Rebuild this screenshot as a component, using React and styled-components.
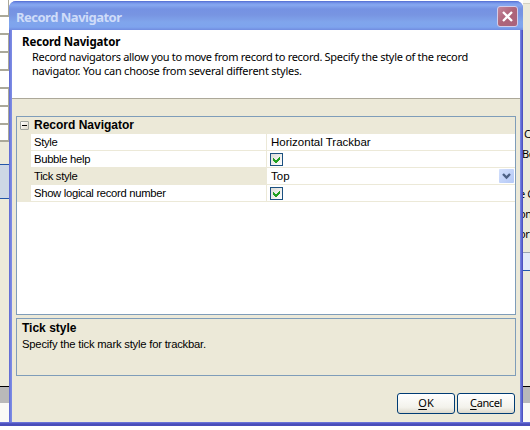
import React from "react";
import styled, { createGlobalStyle } from "styled-components";

const Global = createGlobalStyle`
  * { box-sizing: border-box; }
  body { margin: 0; overflow: hidden; background: #fff; }
`;

const Desktop = styled.div`
  display: grid;
  grid-template-columns: 9px 514px 7px;
  grid-template-rows: 426px 4px;
  width: 530px;
  height: 430px;
  overflow: hidden;
  background: #fff;
  font: 11px/13px "Noto Sans", "Open Sans", sans-serif;
  color: #000;
`;

const Strip = styled.div`
  display: flex;
  flex-direction: column;
  height: 423px;
  overflow: hidden;
  background: #eceada;
`;

const Block = styled.div`
  flex: none;
  height: ${(p) => p.$h}px;
  background: ${(p) => p.$bg || "transparent"};
  border-top: ${(p) => (p.$top ? `1px solid ${p.$top}` : "0")};
  border-bottom: ${(p) => (p.$bottom ? `1px solid ${p.$bottom}` : "0")};
`;

const Cell = styled.div`
  flex: none;
  width: 9px;
  height: ${(p) => p.$h || 18}px;
  background: #fff;
  border-bottom: 2px solid #aaa899;
  border-right: ${(p) => (p.$edge ? "1px solid #aaa899" : "0")};
`;

const Fragment = styled.div`
  flex: none;
  height: 20px;
  line-height: 20px;
  margin-left: ${(p) => p.$x}px;
  letter-spacing: -0.4px;
  white-space: nowrap;
`;

const Frame = styled.section`
  display: flex;
  flex-direction: column;
  height: 425px;
  margin-top: 1px;
  border-radius: 7px 7px 0 0;
  overflow: hidden;
  background: linear-gradient(90deg, #5c66cf 0, #7b8ae4 2px, #7b8ae4 511px, #6874dc 512px, #4548b8 514px);
`;

const TitleBar = styled.header`
  flex: none;
  display: flex;
  justify-content: space-between;
  height: 29px;
  padding: 5px 5px 0 7px;
  background: linear-gradient(#526bd0 0, #7797eb 2px, #86a8f0 4px, #7592e3 8px, #7895e2 14px, #80a5ec 21px, #7ea4ee 26px, #718ce0 29px);
`;

const Title = styled.h1`
  margin: 0;
  font: bold 13px/23px "Noto Sans", sans-serif;
  letter-spacing: -0.5px;
  color: #cfdcf9;
`;

const CloseButton = styled.button`
  display: grid;
  place-items: center;
  width: 21px;
  height: 21px;
  padding: 0;
  border: 1px solid #d2cdea;
  border-radius: 3px;
  background: linear-gradient(135deg, #c3869b, #ae6479 50%, #a9627c);
`;

const Body = styled.div`
  display: flex;
  flex-direction: column;
  height: 393px;
  flex: none;
  margin: 0 3px;
  background: #ece9d8;
`;

const Intro = styled.div`
  flex: none;
  height: 69px;
  padding: 5px 0 0 10px;
  background: #fff;
  border-bottom: 1px solid #aca899;
`;

const Line = styled.p`
  margin: 0;
  width: max-content;
  white-space: nowrap;
  padding-left: ${(p) => p.$indent || 0}px;
  font-size: ${(p) => p.$size || 11}px;
  font-weight: ${(p) => (p.$bold ? 700 : 400)};
  font-family: ${(p) => (p.$grotesk ? '"Liberation Sans", sans-serif' : "inherit")};
  line-height: ${(p) => p.$lh || 13}px;
  letter-spacing: ${(p) => p.$track || 0}px;
`;

const Grid = styled.div`
  flex: none;
  width: 500px;
  height: 199px;
  margin: 17px 0 0 4px;
  border: 1px solid #7f9db9;
  background: #fff;
`;

const GroupRow = styled.div`
  display: flex;
  align-items: center;
  height: 17px;
  background: #ece9d8;
`;

const Toggle = styled.span`
  display: grid;
  place-items: center;
  width: 9px;
  height: 9px;
  margin: 0 5px 1px 3px;
  border: 1px solid #a0a5a0;
  border-radius: 1px;
  background: linear-gradient(135deg, #fff, #dcd8ca);
  &::after { content: ""; width: 5px; height: 1px; background: #000; }
`;

const Row = styled.div`
  display: grid;
  grid-template-columns: 14px 236px 1fr;
  height: 17px;
`;

const Gutter = styled.div`
  background: #ece9d8;
`;

const Name = styled.div`
  padding: 1px 0 0 3px;
  border-right: 1px solid #ece9d8;
  border-bottom: 1px solid #ece9d8;
  background: ${(p) => (p.$selected ? "#ece9d8" : "#fff")};
`;

const Value = styled.div`
  display: flex;
  justify-content: space-between;
  padding: ${(p) => (p.$check ? "2px 0 0 3px" : "1px 1px 0 4px")};
  border-bottom: 1px solid #ece9d8;
`;

const CheckBox = styled.span`
  display: grid;
  place-items: center;
  width: 13px;
  height: 13px;
  border: 1px solid #1c5180;
  background: linear-gradient(135deg, #dcdcd7, #fff);
`;

const DropButton = styled.span`
  display: grid;
  place-items: center;
  width: 15px;
  height: 14px;
  border-radius: 1px;
  background: linear-gradient(135deg, #d3e0fc, #b4c8f6);
`;

const Help = styled.div`
  flex: none;
  width: 500px;
  height: 58px;
  margin: 3px 0 0 4px;
  padding: 2px 0 0 5px;
  border: 1px solid #7f9db9;
`;

const Actions = styled.footer`
  display: flex;
  justify-content: flex-end;
  gap: 2px;
  padding: 17px 5px 0 0;
`;

const Button = styled.button`
  width: 58px;
  height: 21px;
  padding: 0 0 1px;
  border: 1px solid #003c74;
  border-radius: 3px;
  background: linear-gradient(#fff, #f3f2eb 70%, #dcd8cb);
  font: 11px/18px "Noto Sans", sans-serif;
  letter-spacing: ${(p) => p.$track || 0}px;
  color: #000;
`;

const Key = styled.span`
  text-decoration: underline;
  text-underline-offset: 2px;
`;

const BottomEdge = styled.div`
  grid-column: 1 / -1;
  height: 4px;
  margin-top: -4px;
  background: linear-gradient(#7480df 0, #5c62cf 1px, #484cb8 2px, #4a4ebb 4px);
`;

const Check = () => (
  <CheckBox>
    <svg width="9" height="9" viewBox="0 0 9 9" shapeRendering="crispEdges">
      <path d="M1 3v3l2 2h1l4-4V1L3.5 5.5z" fill="#21a121" />
    </svg>
  </CheckBox>
);

const rows = [
  { name: "Style", value: "Horizontal Trackbar" },
  { name: "Bubble help", check: true },
  { name: "Tick style", value: "Top", drop: true },
  { name: "Show logical record number", check: true },
];

export default function App() {
  return (
    <>
      <Global />
      <Desktop>
        <Strip>
          <Cell $h={17} $edge />
          <Cell $h={18} />
          <Cell $edge />
          <Cell $edge />
          <Cell />
          <Cell $edge />
          <Cell $edge />
          <Cell $h={17} $edge />
          <Block $h={22} />
          <Block $h={35} $bg="#cdd7e5" $top="#2456a8" $bottom="#2456a8" />
          <Block $h={187} />
          <Block $h={17} $bg="#b9b9b9" $top="#000" />
          <Block $h={20} $bg="#fafaf6" />
        </Strip>
        <Frame>
          <TitleBar>
            <Title>Record Navigator</Title>
            <CloseButton aria-label="Close">
              <svg width="13" height="13" viewBox="0 0 13 13">
                <path d="M2 2l9 9M11 2l-9 9" stroke="#fff" strokeWidth="2.3" />
              </svg>
            </CloseButton>
          </TitleBar>
          <Body>
            <Intro>
              <Line $bold $size={11.5} $lh={14} $track={-0.14}>Record Navigator</Line>
              <Line $indent={10} $lh={15} $track={-0.3}>Record navigators allow you to move from record to record. Specify the style of the record</Line>
              <Line $indent={10} $track={-0.24}>navigator. You can choose from several different styles.</Line>
            </Intro>
            <Grid>
              <GroupRow>
                <Toggle />
                <Line $bold $grotesk $size={12}>Record Navigator</Line>
              </GroupRow>
              {rows.map((r) => (
                <Row key={r.name}>
                  <Gutter />
                  <Name $selected={r.drop}><Line $grotesk $size={11.25} $lh={14} $track={-0.3}>{r.name}</Line></Name>
                  <Value $check={r.check}>
                    {r.check ? <Check /> : <Line $grotesk $size={11.5} $lh={14}>{r.value}</Line>}
                    {r.drop && (
                      <DropButton>
                        <svg width="9" height="7" viewBox="0 0 9 7">
                          <path d="M1 1l3.5 3.5L8 1" fill="none" stroke="#4d6185" strokeWidth="2.4" />
                        </svg>
                      </DropButton>
                    )}
                  </Value>
                </Row>
              ))}
            </Grid>
            <Help>
              <Line $bold $grotesk $size={12} $lh={14}>Tick style</Line>
              <Line $grotesk $size={11.25} $lh={18} $track={-0.21}>Specify the tick mark style for trackbar.</Line>
            </Help>
            <Actions>
              <Button><Key>O</Key>K</Button>
              <Button $track={-0.4}><Key>C</Key>ancel</Button>
            </Actions>
          </Body>
        </Frame>
        <Strip>
          <Block $h={4} $bg="#f8f7ef" $bottom="#d5d2c2" />
          <Block $h={120} />
          <Fragment $x={1}>C</Fragment>
          <Fragment $x={-1}>Bo</Fragment>
          <Block $h={20} />
          <Fragment $x={-4}>e C</Fragment>
          <Fragment $x={-4}>on</Fragment>
          <Fragment $x={-4}>or</Fragment>
          <Block $h={8} />
          <Block $h={19} $bg="#e3ebf8" $top="#9aa4b0" $bottom="#2458ac" />
          <Block $h={115} />
          <Block $h={17} $bg="#b9b9b9" $top="#000" />
          <Block $h={20} $bg="#fafaf6" />
        </Strip>
        <BottomEdge />
      </Desktop>
    </>
  );
}
